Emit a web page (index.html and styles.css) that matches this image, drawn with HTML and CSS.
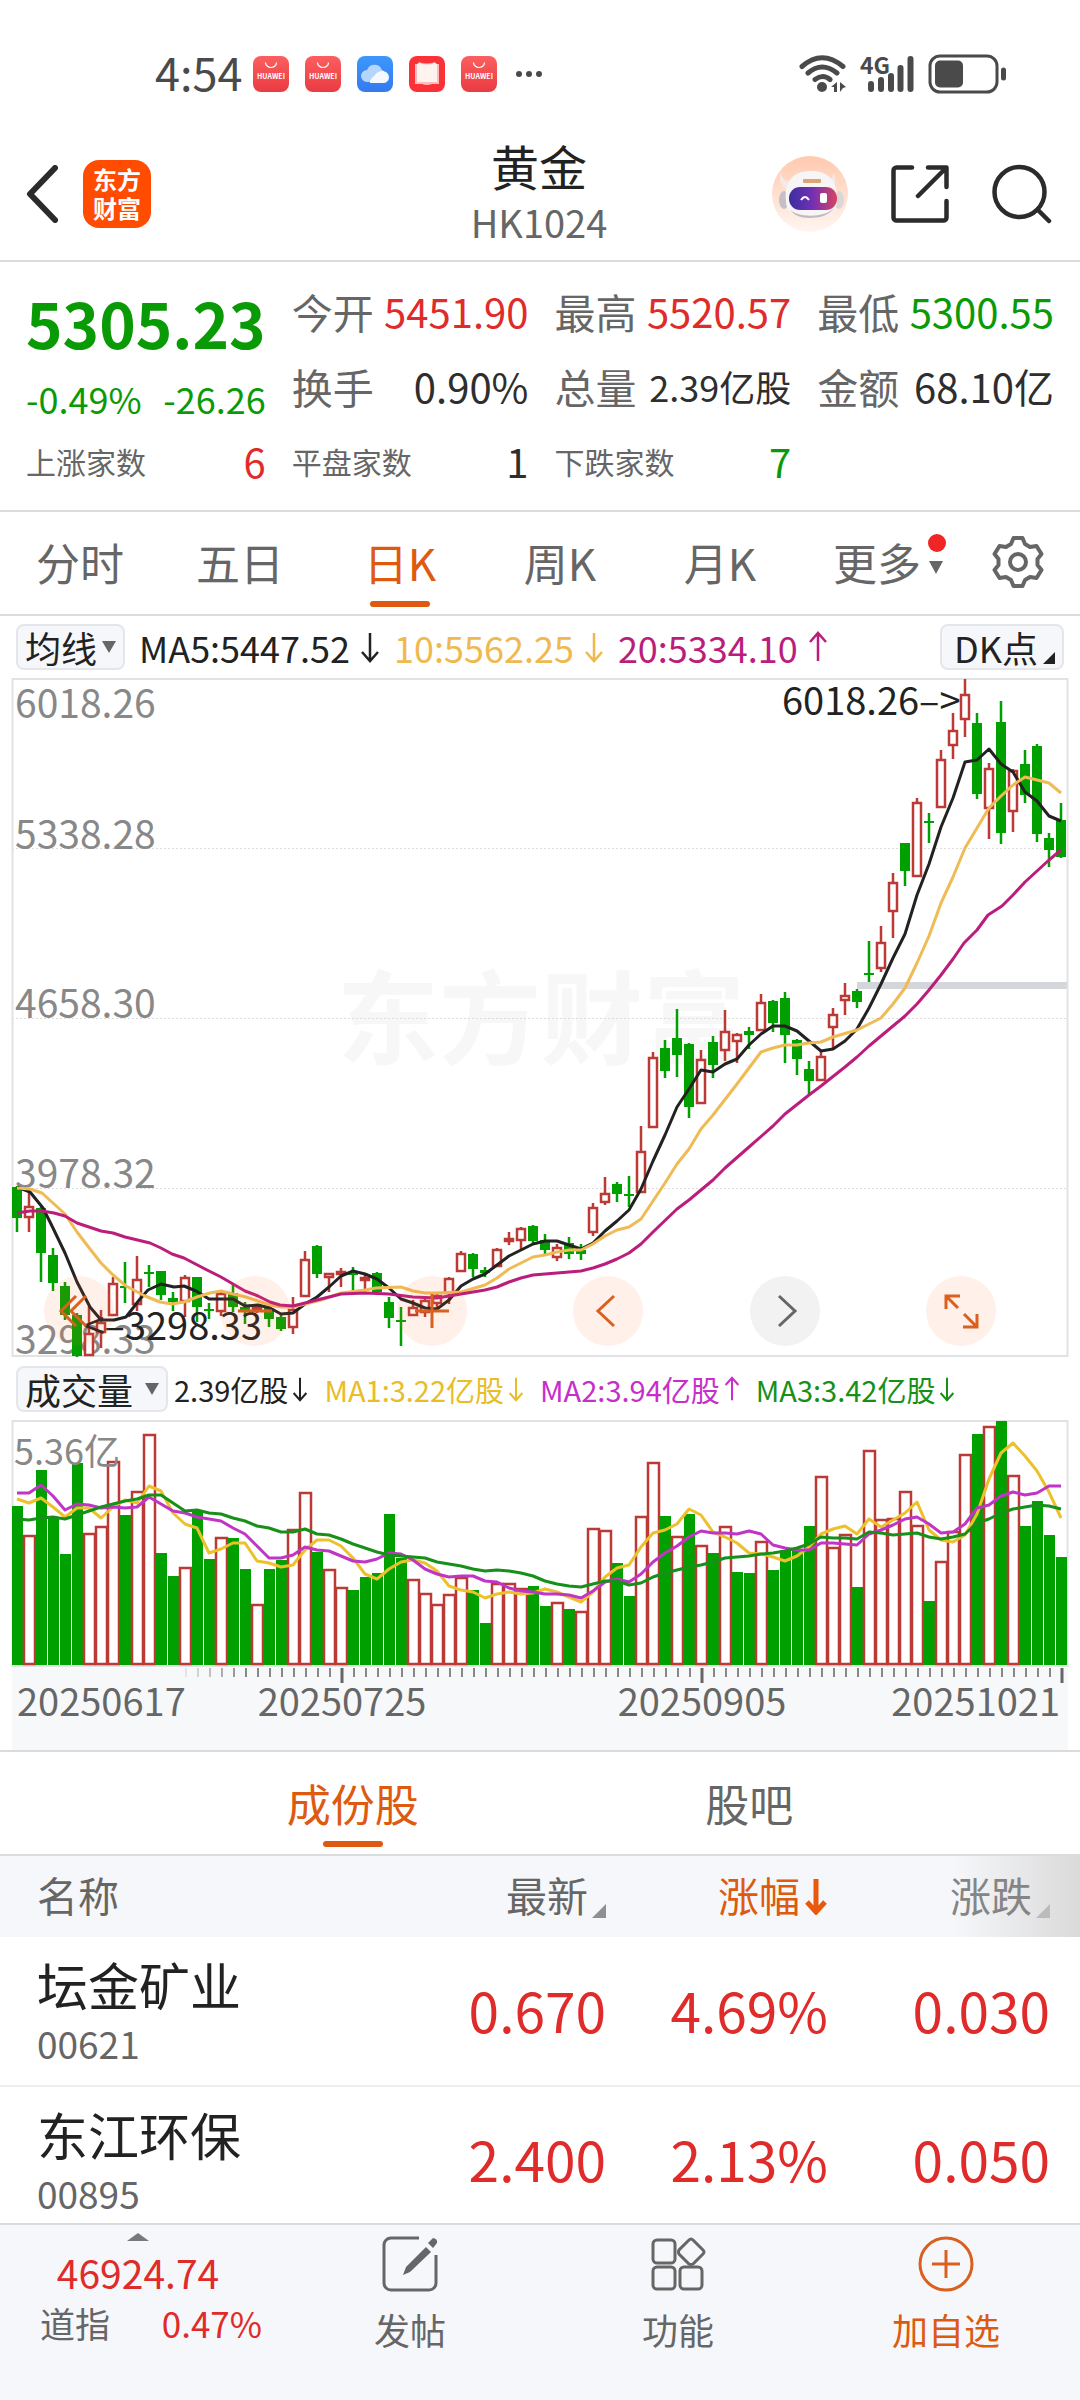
FILE: index.html
```html
<!DOCTYPE html>
<html lang="zh-CN">
<head>
<meta charset="utf-8">
<meta name="viewport" content="width=device-width, initial-scale=1">
<title>黄金 HK1024</title>
<link rel="stylesheet" href="styles.css">
</head>
<body>
<svg class="defs" aria-hidden="true">
  <defs>
    <linearGradient id="g-red" x1="0" y1="0" x2="0" y2="1"><stop offset="0" stop-color="#fb5f5f"/><stop offset="1" stop-color="#ea3b42"/></linearGradient>
    <linearGradient id="g-blue" x1="0" y1="0" x2="0" y2="1"><stop offset="0" stop-color="#3c98fc"/><stop offset="1" stop-color="#3579f0"/></linearGradient>
    <linearGradient id="g-peach" x1="0" y1="0" x2="0" y2="1"><stop offset="0" stop-color="#ffc9ae"/><stop offset="1" stop-color="#fff6f1"/></linearGradient>
    <linearGradient id="g-visor" x1="0" y1="0" x2="1" y2="0"><stop offset="0" stop-color="#3b2f9e"/><stop offset=".5" stop-color="#7430b4"/><stop offset="1" stop-color="#d8455f"/></linearGradient>
    <symbol id="store" viewBox="0 0 36 36">
      <rect width="36" height="36" rx="8" fill="url(#g-red)"/>
      <path d="M12.500 6.500a5.500 5 0 0 0 11 0" fill="none" stroke="#fff" stroke-width="1.200"/>
      <text x="18" y="23" font-size="7" font-weight="700" text-anchor="middle" fill="#fff">HUAWEI</text>
    </symbol>
    <symbol id="down" viewBox="0 0 20 32"><path d="M10 2v27M2 21l8 9 8-9" fill="none" stroke="currentColor" stroke-width="2.500"/></symbol>
    <symbol id="up" viewBox="0 0 20 32"><path d="M10 30V3M2 11l8-9 8 9" fill="none" stroke="currentColor" stroke-width="2.500"/></symbol>
  </defs>
</svg>

<div class="status">
  <time class="clock">4:54</time>
  <div class="apps">
    <svg class="app"><use href="#store"/></svg>
    <svg class="app"><use href="#store"/></svg>
    <svg class="app" viewBox="0 0 36 36"><rect width="36" height="36" rx="8" fill="url(#g-blue)"/><path d="M10 26a6 6 0 0 1 0-12 8 8 0 0 1 15 0c4 1 5 12-2 12z" fill="#b5d5fd"/><path d="M13 27c0-4 3-6 5-8 4-6 13-5 14 2 0 4-3 6-6 6z" fill="#f4f9ff"/></svg>
    <svg class="app" viewBox="0 0 36 36"><rect width="36" height="36" rx="8" fill="#fa3137"/><path d="M6 8h3l1-2q8 3 16 0l1 2h3v20h-7q-5 2-10 0H6z" fill="#fbb"/><path d="M8 8l2-1q8 3 16 0l2 1v18H8z" fill="#fff3f0"/></svg>
    <svg class="app"><use href="#store"/></svg>
  </div>
  <svg class="dots" viewBox="0 0 28 6"><g fill="#4a4a4a"><circle cx="4" cy="3" r="3"/><circle cx="14" cy="3" r="3"/><circle cx="24" cy="3" r="3"/></g></svg>
  <svg class="signals" viewBox="798 52 212 42" role="img" aria-label="Wi-Fi 4G">
    <g fill="none" stroke="#4a4a4a" stroke-width="5" stroke-linecap="round"><path d="M802 65.500Q822 48 843 65.500M808 72q14-12 29 0M815 78.500q8-6 15 0"/></g>
    <circle cx="822" cy="86" r="5" fill="#4a4a4a"/>
    <path d="M831 86l6-5v10h-3v-5zM840 81l6 5-3 1-3 4z" fill="#4a4a4a"/>
    <text x="860" y="73" font-size="23" font-weight="700" fill="#4a4a4a" class="net">4G</text>
    <g stroke="#4a4a4a" stroke-width="6" stroke-linecap="round"><path d="M871 83v5M881 79v9M891 75v13M900.500 67v21M910.500 58v30"/></g>
    <rect x="930" y="55" width="67" height="36" rx="10" fill="none" stroke="#4a4a4a" stroke-width="3"/>
    <rect x="935" y="59.500" width="28" height="27" rx="5" fill="#4a4a4a"/>
    <path d="M1003.500 69v8" stroke="#4a4a4a" stroke-width="5" stroke-linecap="round"/>
  </svg>
</div>

<header class="header">
  <div class="side">
    <button class="icon" aria-label="返回"><svg width="32" height="58" viewBox="0 0 32 58"><path d="M29 3L4 29l25 26" fill="none" stroke="#2b2b2b" stroke-width="6" stroke-linecap="round" stroke-linejoin="round"/></svg></button>
    <a class="logo" href="#">东方<br>财富</a>
  </div>
  <div class="title"><h1>黄金</h1><p>HK1024</p></div>
  <div class="side right">
    <button class="icon" aria-label="助手"><svg width="76" height="76" viewBox="0 0 76 76">
      <circle cx="38" cy="38" r="38" fill="url(#g-peach)"/>
      <path d="M9 16c0 6 4 10 10 10L14 33C8 29 7 22 9 16zM61 16c1 6-3 10-8 10l6 7c6-4 5-11 2-17z" fill="#f3eae8"/>
      <ellipse cx="12" cy="44" rx="5" ry="9" fill="#c6bfc6"/><ellipse cx="67" cy="44" rx="5" ry="9" fill="#ddd5d8"/>
      <path d="M14 45C12 24 22 15 39 15s27 9 26 30c0 12-12 17-26 17S14 57 14 45z" fill="#f8f5f6"/>
      <path d="M18 53c6 9 36 9 44-1-4 7-14 10-24 10s-17-3-20-9z" fill="#c3b9c4"/>
      <rect x="31" y="23" width="18" height="4" rx="1" fill="#e0a376"/>
      <rect x="17" y="31" width="48" height="23" rx="11" fill="url(#g-visor)"/>
      <path d="M29 44q4-6 8 0" fill="none" stroke="#fff" stroke-width="2"/><rect x="48" y="37" width="7" height="10" rx="2" fill="#fff"/>
    </svg></button>
    <button class="icon" aria-label="分享"><svg width="58" height="58" viewBox="0 0 58 58"><path d="M21 2.500H5.500a3 3 0 0 0-3 3v47a3 3 0 0 0 3 3h47a3 3 0 0 0 3-3V36M37 2.500h18.500V22M55 3L27 31" fill="none" stroke="#2b2b2b" stroke-width="4.500" stroke-linecap="round" stroke-linejoin="round"/></svg></button>
    <button class="icon" aria-label="搜索"><svg width="60" height="60" viewBox="0 0 60 60"><circle cx="27.500" cy="28" r="25" fill="none" stroke="#2b2b2b" stroke-width="4.500"/><path d="M46 46l11 11" stroke="#2b2b2b" stroke-width="4.500" stroke-linecap="round"/></svg></button>
  </div>
</header>

<section class="quote">
  <div class="last down">
    <strong>5305.23</strong>
    <div class="pair"><span>-0.49%</span><span>-26.26</span></div>
  </div>
  <div class="stat"><span>今开</span><b class="up">5451.90</b></div>
  <div class="stat"><span>最高</span><b class="up">5520.57</b></div>
  <div class="stat"><span>最低</span><b class="down">5300.55</b></div>
  <div class="stat"><span>换手</span><b>0.90%</b></div>
  <div class="stat"><span>总量</span><b class="mid">2.39亿股</b></div>
  <div class="stat"><span>金额</span><b>68.10亿</b></div>
  <div class="stat small"><span>上涨家数</span><b class="up">6</b></div>
  <div class="stat small"><span>平盘家数</span><b>1</b></div>
  <div class="stat small"><span>下跌家数</span><b class="down">7</b></div>
</section>

<nav class="periods">
  <button>分时</button>
  <button>五日</button>
  <button class="active">日K</button>
  <button>周K</button>
  <button>月K</button>
  <button class="more">更多<svg width="14" height="40" viewBox="0 0 14 40"><path d="M0 19h14L7 32z" fill="#666"/></svg><i class="badge"></i></button>
  <button aria-label="设置"><svg width="54" height="54" viewBox="0 0 54 54"><path d="M22.500 3h9l2.500 6 5 3 6.500-1 5 8-4 5v6l4 5-5 8-6.500-1-5 3-2.500 6h-9L20 45l-5-3-6.500 1-5-8 4-5v-6l-4-5 5-8 6.500 1 5-3z" fill="none" stroke="#666" stroke-width="4" stroke-linejoin="round"/><circle cx="27" cy="27" r="8" fill="none" stroke="#666" stroke-width="4"/></svg></button>
</nav>

<section class="chart">
  <div class="legend">
    <button class="chip">均线<svg width="14" height="12" viewBox="0 0 14 12"><path d="M0 0h14L7 12z" fill="#666"/></svg></button>
    <span class="ma ink">MA5:5447.52<svg><use href="#down"/></svg></span>
    <span class="ma gold">10:5562.25<svg><use href="#down"/></svg></span>
    <span class="ma plum">20:5334.10<svg><use href="#up"/></svg></span>
    <button class="chip dk">DK点<svg width="12" height="12" viewBox="0 0 12 12"><path d="M12 0v12H0z" fill="#222"/></svg></button>
  </div>
  <div class="plot">
    <svg id="price" viewBox="0 678 1080 680" role="img" aria-label="日K线图">
      <text x="337" y="1057" class="mark">东方财富</text>
      <g class="grid"><path d="M12 848.500h1055M12 1018.500h1055M12 1188.500h1055"/></g>
      <rect x="857" y="982" width="210" height="7" fill="#d3d6db"/>
      <rect x="12.500" y="679" width="1055" height="677" class="frame"/>
      <g class="scale"><text x="15" y="718">6018.26</text><text x="15" y="849">5338.28</text><text x="15" y="1018">4658.30</text><text x="15" y="1188">3978.32</text><text x="15" y="1354">3298.33</text></g>
      <g id="candles"></g>
      <g class="line">
        <polyline stroke="#222" points="17,1187 30,1192 43,1208 52,1226 65,1253 77,1282 90,1307 101,1320 114,1320 126,1317 133,1308 140,1299 148,1290 161,1284 174,1287 184,1286 196,1291 209,1299 233,1299 245,1306 258,1305 270,1308 281,1314 293,1313 305,1304 317,1297 329,1287 341,1276 353,1271 365,1274 377,1279 389,1288 401,1299 413,1303 425,1308 437,1309 449,1300 461,1286 473,1279 485,1274 497,1265 509,1256 521,1250 533,1244 545,1241 557,1241 569,1245 581,1249 593,1243 605,1231 617,1221 629,1210 641,1189 653,1161 665,1135 677,1107 689,1089 701,1070 713,1072 725,1064 737,1059 749,1045 761,1034 773,1026 785,1026 797,1031 809,1041 821,1051 833,1049 845,1041 857,1029 869,1008 881,984 893,958 905,934 917,895 929,864 941,827 953,798 965,762 977,760 989,749 1001,764 1013,772 1025,792 1037,801 1049,816 1061,821"/>
        <polyline stroke="#efbb55" points="17,1188 30,1189 42,1193 65,1214 77,1232 90,1249 101,1263 113,1275 126,1286 145,1296 160,1302 172,1304 184,1302 197,1297 210,1293 221,1291 233,1294 246,1297 258,1301 270,1305 282,1307 293,1307 305,1304 321,1300 341,1293 365,1290 376,1288 401,1287 413,1291 425,1293 437,1293 461,1292 485,1285 497,1278 509,1269 521,1263 533,1257 545,1255 557,1252 569,1250 581,1250 593,1244 605,1236 617,1230 629,1227 641,1219 653,1201 665,1183 677,1164 689,1149 701,1129 713,1115 737,1084 761,1052 773,1048 785,1045 797,1045 809,1043 821,1042 833,1037 857,1030 869,1024 881,1018 893,1004 905,988 917,963 929,936 941,903 953,877 965,848 977,828 989,808 1001,796 1013,785 1025,777 1037,780 1049,783 1061,793"/>
        <polyline stroke="#bb1d7c" points="17,1213 30,1211 42,1211 54,1213 65,1216 77,1223 101,1231 113,1233 125,1237 150,1243 161,1248 172,1254 184,1258 209,1271 221,1277 245,1291 258,1296 270,1302 280,1305 293,1306 305,1303 317,1300 341,1294 365,1293 389,1294 413,1297 437,1298 455,1295 485,1290 497,1287 509,1282 521,1278 533,1275 545,1274 557,1273 581,1271 593,1268 605,1264 617,1259 629,1253 641,1244 653,1232 677,1209 689,1200 713,1180 725,1168 749,1147 773,1126 785,1114 809,1095 821,1086 845,1067 857,1057 869,1046 881,1036 893,1026 905,1016 917,1004 929,990 941,975 953,959 964,943 977,930 988,915 1002,906 1013,895 1025,882 1037,871 1049,860 1061,850"/>
      </g>
      <g class="peak"><text x="782" y="715">6018.26–&gt;</text><text x="262" y="1340" text-anchor="end">&lt;–3298.33</text></g>
    </svg>
    <div class="tools">
      <button aria-label="最左"><svg viewBox="0 0 70 70"><path d="M32 20L17 35l15 15M42 20L27 35l15 15"/></svg></button>
      <button aria-label="缩小"><svg viewBox="0 0 70 70"><path d="M18 35h34"/></svg></button>
      <button aria-label="放大"><svg viewBox="0 0 70 70"><path d="M18 35h34M35 18v34"/></svg></button>
      <button aria-label="左移"><svg viewBox="0 0 70 70"><path d="M41 20L25 35l16 15"/></svg></button>
      <button class="off" aria-label="右移"><svg viewBox="0 0 70 70"><path d="M29 20l16 15-16 15"/></svg></button>
      <button aria-label="全屏"><svg viewBox="0 0 70 70"><path d="M20 33V20h14M20 20l12 12M51 38v13H37M51 51L38 38"/></svg></button>
    </div>
  </div>
  <div class="legend volume">
    <button class="chip wide">成交量<svg width="14" height="12" viewBox="0 0 14 12"><path d="M0 0h14L7 12z" fill="#666"/></svg></button>
    <span class="ma ink">2.39亿股<svg><use href="#down"/></svg></span>
    <span class="ma yellow">MA1:3.22亿股<svg><use href="#down"/></svg></span>
    <span class="ma violet">MA2:3.94亿股<svg><use href="#up"/></svg></span>
    <span class="ma green">MA3:3.42亿股<svg><use href="#down"/></svg></span>
  </div>
  <svg id="volume" viewBox="0 1420 1080 330" role="img" aria-label="成交量图">
    <rect x="12" y="1666" width="1056" height="84" fill="#f7f8fa"/>
    <rect x="12.500" y="1421" width="1055" height="245" class="frame"/>
    <g id="bars"></g>
    <text x="14" y="1465" class="cap">5.36亿</text>
    <g id="averages" class="line"></g>
    <g id="ticks"></g>
    <g class="date"><text x="17" y="1716">20250617</text><text x="342" y="1716" text-anchor="middle">20250725</text><text x="702" y="1716" text-anchor="middle">20250905</text><text x="1060" y="1716" text-anchor="end">20251021</text></g>
  </svg>
</section>

<nav class="tabs">
  <button class="active">成份股</button>
  <button>股吧</button>
</nav>

<main class="list">
  <table>
    <thead>
      <tr><th>名称</th><th>最新<svg width="14" height="14" viewBox="0 0 14 14"><path d="M14 0v14H0z" fill="#8d8f92"/></svg></th><th class="sorted">涨幅<svg width="24" height="36" viewBox="0 0 24 36"><path d="M12 0v32M3 23l9 10 9-10" fill="none" stroke="#e8590c" stroke-width="5"/></svg></th><th class="fade">涨跌<svg width="14" height="14" viewBox="0 0 14 14"><path d="M14 0v14H0z" fill="#bbb"/></svg></th></tr>
    </thead>
    <tbody>
      <tr><td><span class="name">坛金矿业</span><span class="code">00621</span></td><td>0.670</td><td>4.69%</td><td>0.030</td></tr>
      <tr><td><span class="name">东江环保</span><span class="code">00895</span></td><td>2.400</td><td>2.13%</td><td>0.050</td></tr>
    </tbody>
  </table>
</main>

<footer class="dock">
  <button class="index">
    <svg width="22" height="8" viewBox="0 0 22 8"><path d="M0 8L11 0l11 8z" fill="#77797c"/></svg>
    <span class="up big">46924.74</span>
    <span class="line2"><span>道指</span><span class="up">0.47%</span></span>
  </button>
  <button>
    <svg width="56" height="56" viewBox="0 0 56 56"><path d="M37 2H9a7 7 0 0 0-7 7v38a7 7 0 0 0 7 7h38a7 7 0 0 0 7-7V19" fill="none" stroke="#666" stroke-width="3"/><path d="M44 11l5 5-21 20-7 3 3-8z" fill="#666"/><path d="M46 7l5-5q5 1 4 5l-4 5z" fill="#666"/></svg>
    <span>发帖</span>
  </button>
  <button>
    <svg width="56" height="56" viewBox="0 0 56 56"><g fill="none" stroke="#666" stroke-width="3"><rect x="3" y="4" width="22" height="23" rx="4"/><rect x="3" y="31" width="22" height="22" rx="4"/><rect x="30" y="31" width="22" height="22" rx="4"/><path d="M39 4q2-2 4 0l10 10q2 2 0 4L43 28q-2 1-4 0L29 18q-1-2 0-4z"/></g></svg>
    <span>功能</span>
  </button>
  <button class="add">
    <svg width="56" height="56" viewBox="0 0 56 56"><circle cx="28" cy="28" r="26" fill="none" stroke="#d9601f" stroke-width="3"/><path d="M28 14v28M14 28h28" stroke="#d9601f" stroke-width="3"/></svg>
    <span>加自选</span>
  </button>
</footer>
<script src="chart.js"></script>
</body>
</html>
```
FILE: styles.css
```css
* { box-sizing: border-box; margin: 0; padding: 0; }
body {
  display: flex; flex-direction: column; height: 100vh;
  font-family: "Noto Sans CJK SC", "Noto Sans", sans-serif;
  color: #2e2e2e; background: #fff;
}
body > * { flex: none; }
button { font: inherit; color: inherit; background: none; border: 0; }
svg { display: block; flex: none; }
.defs { position: absolute; width: 0; height: 0; }
.up { color: #e02b2b; }
.down { color: #0a9a05; }

.status { display: flex; align-items: center; height: 128px; padding: 20px 70px 0 155px; }
.clock { padding-bottom: 4px; font-size: 45px; line-height: 48px; color: #4a4a4a; }
.apps { display: flex; gap: 16px; margin-left: 11px; }
.app { width: 36px; height: 36px; }
.dots { width: 28px; margin-left: 18px; }
.signals { width: 212px; height: 42px; margin-left: auto; }

.header { display: grid; grid-template-columns: 1fr auto 1fr; align-items: center; height: 134px; padding: 0 28px 0 26px; border-bottom: 2px solid #d9dbdd; }
.side { display: flex; align-items: center; gap: 25px; }
.side.right { justify-content: flex-end; gap: 43px; }
.logo { width: 68px; height: 68px; padding-top: 4px; border-radius: 16px; background: #ff4c00; color: #fff; font-size: 24px; font-weight: 700; line-height: 29px; text-align: center; text-decoration: none; }
.title { text-align: center; }
.title h1 { font-size: 48px; font-weight: 400; line-height: 56px; color: #222; }
.title p { font-size: 38px; line-height: 58px; color: #666; }

.quote { display: grid; grid-template-columns: repeat(4, 1fr); grid-auto-rows: 75px; column-gap: 26px; padding: 11px 26px 12px; border-bottom: 2px solid #d9dbdd; }
.last { grid-row: span 2; }
.last strong { display: block; font-size: 62px; line-height: 98px; }
.pair { display: flex; justify-content: space-between; font-size: 36px; line-height: 54px; }
.stat { display: flex; align-items: center; justify-content: space-between; font-size: 40px; white-space: nowrap; }
.stat span { color: #666; font-size: 41px; }
.stat b { font-weight: 400; }
.stat .mid { font-size: 36px; }
.stat.small span { font-size: 30px; }

.periods { display: grid; grid-template-columns: 160fr 160fr 160fr 160fr 160fr 176fr 84fr; height: 104px; padding-right: 20px; border-bottom: 2px solid #d9dbdd; color: #666; font-size: 44px; }
.periods button { position: relative; display: flex; align-items: center; justify-content: center; padding-bottom: 2px; }
.periods .more { gap: 8px; }
.badge { position: absolute; right: 30px; top: 22px; width: 18px; height: 18px; border-radius: 50%; background: #f02525; }
.active { color: #dd5a10; }
.active::after { content: ""; position: absolute; bottom: 7px; left: 50%; width: 60px; height: 6px; margin-left: -30px; border-radius: 3px; background: #dd5a10; }

.legend { display: flex; align-items: center; gap: 14px; height: 62px; padding: 0 16px; font-size: 36px; line-height: 44px; white-space: nowrap; }
.chip { display: flex; align-items: center; gap: 5px; height: 46px; padding: 0 7px; border: 2px solid #e4e6ea; border-radius: 8px; background: #f6f7fa; color: #222; }
.chip.wide { gap: 12px; }
.chip.dk { margin-left: auto; padding-left: 12px; }
.dk svg { align-self: flex-end; margin-bottom: 4px; }
.ma { display: flex; align-items: center; gap: 10px; }
.ma svg { width: 20px; height: 32px; }
.volume { gap: 16px; }
.volume .ma { gap: 4px; font-size: 29px; }
.volume .ma svg { width: 16px; }
.volume .chip { margin-right: -10px; }
.ink { color: #222; }
.gold { color: #f0b94f; }
.plum { color: #bb1d7c; }
.yellow { color: #e9bd28; }
.violet { color: #c72fcb; }
.green { color: #17901a; }

.plot { position: relative; }
#price, #volume { width: 100%; height: auto; }
.frame { fill: none; stroke: #e1e2e4; stroke-width: 2; }
.grid { stroke: #dcdcdc; stroke-dasharray: 2 2; }
.mark { font-size: 102px; font-weight: 700; fill: #f7f7f7; }
.scale { font-size: 39px; fill: #888; }
.cap { font-size: 36px; fill: #888; }
.peak { font-size: 38px; fill: #222; }
.date { font-size: 38px; fill: #666; }
.line { fill: none; stroke-width: 3; stroke-linejoin: round; }
.tools { position: absolute; left: 44px; right: 84px; bottom: 12px; display: flex; justify-content: space-between; }
.tools button { width: 70px; height: 70px; border-radius: 50%; background: rgba(255, 110, 40, .1); }
.tools svg { fill: none; stroke: #d9601f; stroke-width: 3; }
.tools .off { background: #f2f2f2; }
.tools .off svg { stroke: #666; }

.tabs { display: flex; justify-content: space-evenly; height: 106px; border-top: 2px solid #d9dbdd; border-bottom: 2px solid #d9dbdd; font-size: 44px; color: #666; }
.tabs button { position: relative; }

.list { flex: 1 1 0; min-height: 0; overflow: hidden; }
table { width: 100%; border-collapse: collapse; table-layout: fixed; }
th { width: 222px; height: 81px; padding-bottom: 5px; background: #f6f7fa; color: #666; font-size: 41px; font-weight: 400; line-height: 60px; text-align: right; white-space: nowrap; }
th:first-child { width: 384px; }
th:last-child { width: auto; }
th:last-child, td:last-child { padding-right: 30px; }
th svg { display: inline-block; margin-left: 4px; vertical-align: -6px; }
th.sorted { color: #dd5a10; }
th.fade { background: linear-gradient(90deg, #f6f7fa 50%, #dadada); color: #858585; }
.sorted svg { vertical-align: -3px; }
td { height: 149px; padding-bottom: 5px; border-bottom: 2px solid #eee; color: #e02b2b; font-size: 55px; line-height: 80px; text-align: right; }
th:first-child, td:first-child { padding-left: 37px; text-align: left; }
td:first-child { padding-bottom: 0; }
.name, .code { display: block; }
.name { font-size: 51px; line-height: 64px; color: #222; }
.code { font-size: 37px; line-height: 54px; color: #666; }

.dock { display: grid; grid-template-columns: 276fr 268fr 268fr 268fr; height: 177px; border-top: 2px solid #d9dbdd; background: #f6f7fa; color: #666; font-size: 36px; line-height: 50px; }
.dock button { display: flex; flex-direction: column; align-items: center; gap: 12px; padding-top: 11px; }
.dock .index { gap: 5px; padding-top: 8px; }
.dock .big { font-size: 39px; line-height: 52px; }
.line2 { display: flex; align-self: stretch; justify-content: space-between; padding: 0 14px 0 40px; font-size: 35px; line-height: 40px; }
.dock .add { color: #dd5a10; }
```
FILE: chart.js
```js
const NS = "http://www.w3.org/2000/svg";
const STEP = 12;
const FIRST = 17;
const RED = "#bb3a35";
const GREEN = "#00a000";

// direction (r = rise, g = fall), high, body top, body bottom, low
const candles = `g 1186 1187 1218 1232|r 1190 1206 1218 1232|g 1207 1208 1253 1282|g 1248 1255 1283 1291|g 1282 1286 1315 1320|g 1313 1315 1356 1357|r 1306 1333 1356 1356|r 1310 1322 1333 1348|r 1277 1283 1316 1316|g 1262 1286 1288 1303|r 1256 1279 1305 1311|g 1265 1272 1274 1287|g 1271 1271 1295 1300|g 1292 1298 1302 1311|r 1275 1277 1302 1317|g 1277 1277 1307 1322|g 1303 1309 1311 1319|r 1290 1293 1312 1316|g 1285 1293 1307 1312|g 1302 1307 1311 1324|r 1305 1306 1310 1313|g 1306 1308 1319 1327|g 1313 1317 1329 1331|r 1297 1309 1328 1334|r 1251 1259 1297 1297|g 1245 1246 1274 1278|r 1273 1273 1278 1292|r 1268 1271 1275 1287|g 1267 1272 1275 1291|r 1275 1277 1281 1289|g 1272 1273 1292 1293|g 1297 1302 1318 1328|g 1307 1320 1322 1346|r 1300 1307 1316 1316|r 1297 1300 1313 1317|r 1292 1295 1304 1310|r 1277 1278 1294 1304|r 1251 1253 1272 1272|g 1253 1254 1269 1277|g 1267 1270 1273 1277|r 1248 1249 1267 1267|r 1232 1238 1242 1245|r 1227 1228 1241 1249|g 1225 1226 1241 1243|g 1234 1240 1250 1256|r 1244 1247 1258 1261|g 1237 1243 1254 1259|g 1244 1250 1254 1260|r 1203 1207 1233 1236|r 1177 1193 1203 1205|g 1182 1184 1194 1202|g 1176 1194 1196 1207|r 1126 1151 1193 1193|r 1052 1057 1128 1128|g 1040 1048 1071 1078|g 1009 1038 1055 1077|g 1043 1044 1107 1118|r 1050 1059 1104 1104|g 1036 1042 1065 1078|r 1010 1031 1051 1061|r 1033 1034 1042 1063|g 1027 1031 1035 1049|r 994 1002 1031 1031|g 1000 1001 1023 1032|g 992 998 1035 1063|g 1039 1040 1059 1075|g 1061 1069 1081 1095|r 1052 1056 1081 1081|r 1008 1014 1028 1048|r 983 995 1001 1015|g 989 991 1002 1008|g 941 973 975 982|r 926 942 969 972|r 873 882 912 938|g 843 843 871 886|r 798 802 877 877|g 813 821 823 843|r 750 759 808 808|r 713 730 746 759|r 679 694 720 737|g 713 723 794 799|r 763 768 809 839|g 701 722 833 844|r 769 770 812 832|g 750 764 795 803|g 744 746 834 842|g 833 838 850 867|g 803 820 857 858`
  .split("|").map((row) => row.split(" "));

const volumes = [1506, 1535, 1470, 1517, 1554, 1463, 1533, 1526, 1461, 1515, 1491, 1434, 1553, 1576, 1567, 1510, 1559, 1537, 1538, 1569, 1604, 1569, 1560, 1529, 1492, 1552, 1569, 1587, 1590, 1577, 1573, 1514, 1558, 1579, 1593, 1604, 1594, 1577, 1590, 1623, 1583, 1583, 1588, 1586, 1606, 1602, 1609, 1611, 1528, 1530, 1563, 1596, 1516, 1462, 1516, 1536, 1514, 1545, 1553, 1526, 1572, 1573, 1541, 1570, 1550, 1549, 1526, 1476, 1547, 1534, 1587, 1450, 1519, 1518, 1491, 1525, 1601, 1561, 1531, 1454, 1434, 1426, 1421, 1475, 1526, 1501, 1535, 1557];

// days on which the close rose over the previous close
const gains = new Set([1, 6, 7, 8, 10, 11, 14, 17, 20, 23, 24, 26, 27, 33, 34, 35, 36, 37, 40, 41, 42, 45, 47, 48, 49, 52, 53, 55, 57, 59, 62, 67, 68, 69, 71, 72, 73, 74, 75, 77, 78, 79, 81, 83]);

const averages = [
  ["#ecc12b", [1499, 1503, 1498, 1507, 1517, 1508, 1508, 1518, 1507, 1500, 1503, 1486, 1491, 1513, 1524, 1528, 1553, 1549, 1543, 1543, 1561, 1563, 1567, 1565, 1550, 1540, 1540, 1546, 1558, 1574, 1579, 1569, 1562, 1560, 1563, 1571, 1586, 1590, 1592, 1598, 1594, 1592, 1594, 1593, 1589, 1592, 1597, 1602, 1592, 1577, 1568, 1565, 1547, 1533, 1530, 1524, 1509, 1515, 1532, 1537, 1543, 1553, 1554, 1557, 1561, 1556, 1547, 1534, 1529, 1526, 1534, 1519, 1527, 1520, 1513, 1502, 1530, 1540, 1542, 1535, 1514, 1479, 1453, 1443, 1456, 1471, 1492, 1518]],
  ["#c035c5", [1493, 1493, 1485, 1496, 1510, 1504, 1505, 1508, 1507, 1508, 1507, 1497, 1504, 1511, 1513, 1517, 1519, 1521, 1528, 1534, 1546, 1558, 1558, 1555, 1547, 1550, 1551, 1556, 1561, 1562, 1559, 1553, 1554, 1560, 1569, 1574, 1577, 1576, 1576, 1581, 1582, 1588, 1591, 1592, 1594, 1594, 1595, 1598, 1591, 1582, 1579, 1582, 1574, 1562, 1553, 1546, 1537, 1531, 1533, 1533, 1534, 1531, 1534, 1545, 1548, 1550, 1550, 1543, 1543, 1544, 1545, 1534, 1530, 1525, 1519, 1517, 1524, 1533, 1532, 1524, 1508, 1505, 1496, 1492, 1495, 1493, 1486, 1486]],
  ["#17901a", [1519, 1520, 1518, 1517, 1519, 1515, 1511, 1507, 1504, 1501, 1499, 1495, 1495, 1503, 1511, 1510, 1513, 1514, 1518, 1521, 1526, 1528, 1532, 1532, 1529, 1534, 1535, 1539, 1544, 1548, 1552, 1555, 1556, 1557, 1558, 1562, 1564, 1566, 1569, 1571, 1570, 1571, 1573, 1576, 1581, 1584, 1586, 1587, 1584, 1581, 1581, 1585, 1583, 1577, 1573, 1570, 1567, 1565, 1562, 1558, 1557, 1556, 1554, 1553, 1551, 1548, 1544, 1537, 1538, 1538, 1539, 1532, 1533, 1535, 1534, 1533, 1537, 1539, 1537, 1534, 1523, 1519, 1513, 1509, 1507, 1505, 1506, 1509]]
];

function add(parent, tag, attributes) {
  const node = document.createElementNS(NS, tag);
  for (const key in attributes) node.setAttribute(key, attributes[key]);
  document.getElementById(parent).appendChild(node);
}

function addBar(parent, rise, x, top, bottom, width, stroke) {
  const inset = rise ? 1 : 0;
  add(parent, "rect", {
    x, y: top + inset, width, height: Math.max(bottom - top - 2 * inset, 1),
    fill: rise ? "#fff" : GREEN, stroke: rise ? RED : "none", "stroke-width": stroke
  });
}

candles.forEach(([way, high, top, bottom, low], i) => {
  const x = FIRST + i * STEP;
  const rise = way === "r";
  add("candles", "path", {
    d: `M${x} ${high}V${top}M${x} ${bottom}V${low}`, stroke: rise ? RED : GREEN, "stroke-width": 2.5
  });
  addBar("candles", rise, rise ? x - 4 : x - 5, +top, +bottom, rise ? 8 : 10, 2.5);
  addBar("bars", gains.has(i), x - 5, volumes[i], 1665, 11, 2.5);
  if (i > 13) {
    const major = i === 27 || i === 57 || i === 87;
    add("ticks", "path", {
      d: `M${x + 1} 1668V${major ? 1683 : 1677}`, stroke: major ? "#666" : "#888",
      "stroke-width": major ? 3 : 2, opacity: Math.min(1, (i - 13) / 6)
    });
  }
});

averages.forEach(([color, values]) => {
  add("averages", "polyline", { points: values.map((y, i) => `${FIRST + i * STEP},${y}`).join(" "), stroke: color });
});
```
